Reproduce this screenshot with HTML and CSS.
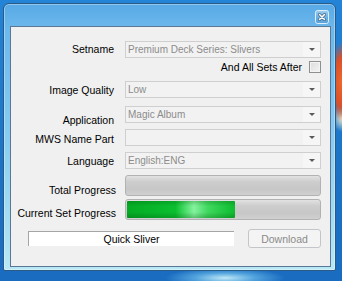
FILE: index.html
```html
<html>
  <head>
    <link rel="stylesheet" href="styles.css">
    <title>Quick Sliver</title>
  </head>
  <body>
    <div class="window">
      <div class="titlebar">
        <button class="close" title="Close">
          <svg width="14" height="14" viewBox="0 0 14 14">
            <defs>
              <linearGradient id="cg" x1="0" y1="0" x2="0" y2="1">
                <stop offset="0" stop-color="#9ccdf0"/>
                <stop offset="0.5" stop-color="#6eb0e2"/>
                <stop offset="1" stop-color="#5aa2da"/>
              </linearGradient>
            </defs>
            <rect x="0.5" y="0.5" width="13" height="13" rx="2" fill="url(#cg)" stroke="#dceefa"/>
            <path d="M4.5 4.5 L9.5 9.5 M9.5 4.5 L4.5 9.5" stroke="#3d5f80" stroke-width="3" stroke-linecap="round"/>
            <path d="M4.5 4.5 L9.5 9.5 M9.5 4.5 L4.5 9.5" stroke="#fff" stroke-width="1.6" stroke-linecap="round"/>
          </svg>
        </button>
      </div>
      <div class="client">
        <div class="row">
          <label class="label">Setname</label>
          <div class="combo">Premium Deck Series: Slivers<span class="arrow"></span></div>
        </div>
        <div class="row after">
          <span>And All Sets After</span>
          <span class="check"></span>
        </div>
        <div class="row gap8">
          <label class="label down1">Image Quality</label>
          <div class="combo">Low<span class="arrow"></span></div>
        </div>
        <div class="row gap8">
          <label class="label down6">Application</label>
          <div class="combo">Magic Album<span class="arrow"></span></div>
        </div>
        <div class="row gap6">
          <label class="label down2">MWS Name Part</label>
          <div class="combo"><span class="arrow"></span></div>
        </div>
        <div class="row gap6">
          <label class="label down1">Language</label>
          <div class="combo">English:ENG<span class="arrow"></span></div>
        </div>
        <div class="row tall gap6">
          <label class="label wide down5">Total Progress</label>
          <div class="progress"><div class="fill" style="width: 0%"></div></div>
        </div>
        <div class="row tall gap3">
          <label class="label wide down4">Current Set Progress</label>
          <div class="progress"><div class="fill" style="width: 56%"></div></div>
        </div>
        <div class="actions">
          <div class="status">Quick Sliver</div>
          <button class="download" disabled>Download</button>
        </div>
      </div>
    </div>
  </body>
</html>
```

FILE: styles.css
```css
body {
  margin: 0;
  width: 342px;
  height: 281px;
  overflow: hidden;
  font-family: "Liberation Sans", Arial, sans-serif;
  font-size: 10.5px;
  color: #000;
  background:
    radial-gradient(ellipse 14px 40px at 342px 82px, #f0682c 0%, #d9502a 60%, rgba(217, 80, 42, 0) 100%),
    radial-gradient(ellipse 10px 14px at 342px 118px, #f4efd0 0%, rgba(244, 239, 208, 0) 100%),
    radial-gradient(ellipse 60px 10px at 225px 278px, #bfe8f6 0%, rgba(120, 200, 240, 0.6) 50%, rgba(30, 120, 210, 0) 100%),
    linear-gradient(#2383d6, #1c73c6 60%, #1a6cc0);
}

.window {
  margin: 3px 0 0 3px;
  width: 333px;
  height: 268px;
  box-sizing: border-box;
  border: 1px solid #2b5a84;
  border-radius: 6px 6px 2px 2px;
  padding: 0 4px 3px 6px;
  display: flex;
  flex-direction: column;
  background: linear-gradient(#58a9e6 0, #6cb8ec 24px, #84c9f0 120px, #a6def3 220px, #b8e8f5 100%);
  box-shadow: inset 0 0 0 1px rgba(255, 255, 255, 0.35);
}

.titlebar {
  height: 22px;
  display: flex;
  justify-content: flex-end;
  align-items: flex-start;
}

.close {
  margin: 6px 2px 0 0;
  padding: 0;
  border: 0;
  width: 14px;
  height: 14px;
  background: none;
  display: block;
}

.close svg {
  display: block;
}

.client {
  flex: 1;
  border: 1px solid #5a7796;
  background: #f0f0f0;
  padding: 14px 9px 0 0;
}

.row {
  display: flex;
  height: 17px;
}

.row.tall {
  height: 21px;
}

.gap3 { margin-top: 3px; }
.gap6 { margin-top: 6px; }
.gap8 { margin-top: 8px; }

.label {
  width: 103px;
  margin-right: 11px;
  text-align: right;
  white-space: nowrap;
  line-height: 17px;
}

.tall .label {
  line-height: 21px;
}

.label.wide {
  width: 105px;
  margin-right: 9px;
}

.down1 { padding-top: 1px; }
.down2 { padding-top: 2px; }
.down4 { padding-top: 4px; }
.down5 { padding-top: 5px; }
.down6 { padding-top: 6px; }

.combo {
  width: 196px;
  box-sizing: border-box;
  border: 1px solid #cfcfcf;
  background: #f2f2f2;
  color: #8c8c8c;
  font-size: 10px;
  line-height: 15px;
  padding-left: 2px;
  display: flex;
}

.arrow {
  margin-left: auto;
  width: 17px;
  background: #f6f6f6;
  display: flex;
  justify-content: center;
  align-items: center;
}

.arrow::after {
  content: "";
  border-left: 3px solid transparent;
  border-right: 3px solid transparent;
  border-top: 3px solid #5a5a5a;
}

.after {
  margin-top: 3px;
  height: 12px;
  justify-content: flex-end;
  align-items: center;
  line-height: 12px;
}

.check {
  width: 12px;
  height: 12px;
  box-sizing: border-box;
  margin-left: 7px;
  border: 1px solid #8e8f8f;
  background: linear-gradient(135deg, #dcdcdc, #f4f4f4);
  box-shadow: inset 0 0 0 1px #f4f4f4;
}

.progress {
  width: 196px;
  box-sizing: border-box;
  border: 1px solid #b2b2b2;
  border-radius: 3px;
  padding: 1px;
  background: linear-gradient(#e2e2e2, #cdcdcd 30%, #c7c7c7 70%, #d0d0d0);
}

.fill {
  height: 100%;
  border-radius: 1px;
  background:
    linear-gradient(rgba(0, 80, 10, 0.25), rgba(255, 255, 255, 0) 30%, rgba(255, 255, 255, 0) 65%, rgba(0, 80, 10, 0.3)),
    linear-gradient(90deg, #04ab24 0%, #0bbf30 45%, #52e070 55%, #86f29e 62%, #3fd85e 75%, #0cbc2e 100%);
}

.actions {
  margin-top: 9px;
  height: 19px;
  display: flex;
  align-items: center;
}

.status {
  margin-left: 17px;
  width: 206px;
  height: 15px;
  box-sizing: border-box;
  background: #fff;
  border-top: 1px solid #a5a5a5;
  border-left: 1px solid #a5a5a5;
  text-align: center;
  line-height: 14px;
}

.download {
  margin-left: 14px;
  width: 73px;
  height: 19px;
  box-sizing: border-box;
  padding: 0;
  border: 1px solid #c2c6c9;
  border-radius: 3px;
  background: #f4f4f4;
  color: #8b8b8b;
  font-family: "Liberation Sans", Arial, sans-serif;
  font-size: 10.5px;
}
```
